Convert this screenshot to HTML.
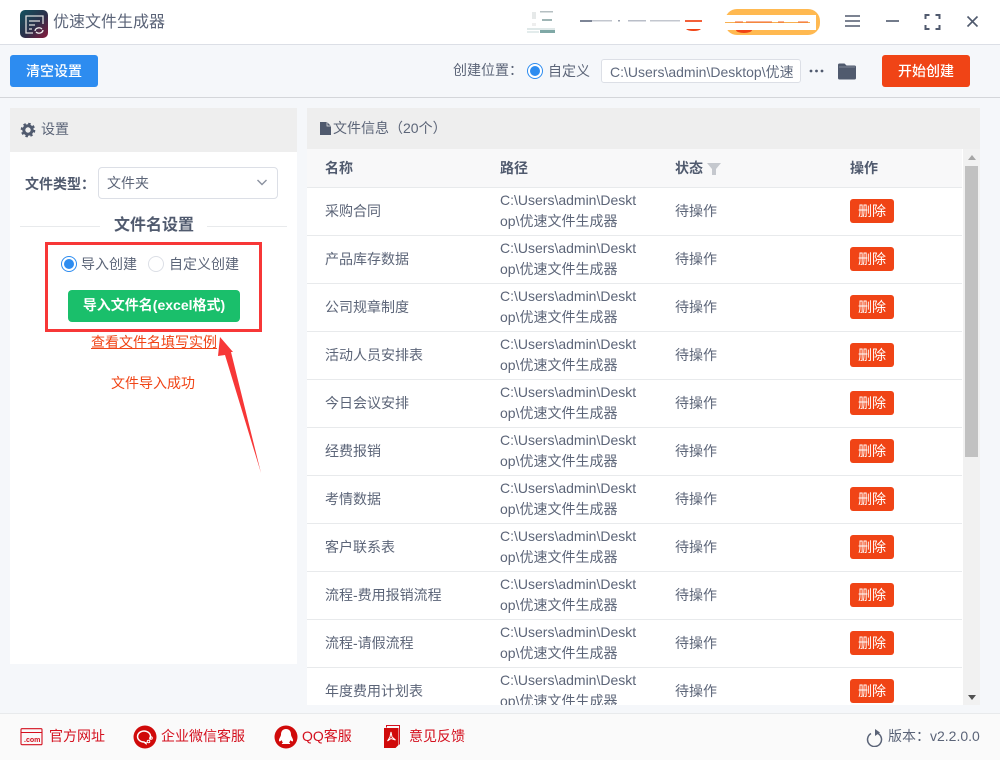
<!DOCTYPE html>
<html lang="zh"><head><meta charset="utf-8"><title>优速文件生成器</title>
<style>
*{box-sizing:border-box}
html,body{margin:0;padding:0}
body{width:1000px;height:760px;position:relative;overflow:hidden;background:#f5f7fa;font-family:"Liberation Sans","Noto Sans CJK SC",sans-serif;font-size:14px;color:#5c6578}
.a{position:absolute;white-space:nowrap}
.hl{color:#505a6e;font-weight:700}
.radio{position:absolute;width:16px;height:16px;border-radius:50%;border:1px solid #dcdfe6;background:#fff}
.radio.on{border:1px solid #2d8cf0}
.radio.on:after{content:"";position:absolute;left:2px;top:2px;width:10px;height:10px;border-radius:50%;background:#2d8cf0}
.row{position:absolute;left:307px;width:655px;height:48px;background:#fff;border-bottom:1px solid #e8eaec}
.row .n,.row .s{position:absolute;top:14px;line-height:18px;white-space:nowrap}
.row .n{left:18px}.row .s{left:368px}
.row .p{position:absolute;left:193px;top:2px;width:150px;line-height:21px;white-space:pre}
.row .d{position:absolute;left:543px;top:11px;width:44px;height:24px;background:#f04416;border-radius:3px;color:#fff;font-size:14px;line-height:24px;text-align:center}
.ft{position:absolute;top:727px;line-height:18px;color:#d4101e;white-space:nowrap}
</style></head><body>
<div class="a" style="left:0;top:0;width:1000px;height:45px;background:#fff;border-bottom:1px solid #dcdfe6"></div>
<svg class="a" style="left:20px;top:10px" width="28" height="28" viewBox="0 0 28 28"><defs><linearGradient id="g" x1="0" y1="0" x2="1" y2="1"><stop offset="0" stop-color="#12525f"/><stop offset=".55" stop-color="#2c2f4a"/><stop offset="1" stop-color="#8a1a3c"/></linearGradient></defs><rect width="28" height="28" rx="5" fill="url(#g)"/><path d="M23 14V6H6v17h7" fill="none" stroke="#ddd" stroke-width="1.300"/><path d="M9 11h11M9 15h6M9 19h3" stroke="#ddd" stroke-width="1.300"/><path d="M15 21a4 3.500 0 0 1 7-2M23 20a4 3.500 0 0 1-7 2" fill="none" stroke="#eee" stroke-width="1.300"/></svg>
<div class="a" style="left:53px;top:11px;font-size:16px;line-height:24px;color:#5b6478">优速文件生成器</div>
<!-- blurred header items -->
<svg class="a" style="left:520px;top:2px" width="310" height="40" viewBox="0 0 310 40">
<rect x="12" y="10" width="4" height="7" fill="#e6e9e9"/><rect x="12" y="21" width="4" height="3" fill="#eee"/><rect x="20" y="9" width="13" height="1.500" fill="#b5bfc2"/><rect x="22" y="17" width="10" height="2" fill="#9fb5b5"/><rect x="7" y="26" width="28" height="2" fill="#dfe8e8"/><rect x="7" y="29" width="12" height="2" fill="#e3ecec"/><rect x="20" y="28" width="15" height="3" fill="#7fa8a6"/>
<rect x="60" y="18" width="12" height="2" fill="#7d8596"/><rect x="72" y="18" width="20" height="1.500" fill="#c3c7cf"/><rect x="98" y="18" width="2" height="1.500" fill="#9aa1ae"/><rect x="108" y="18" width="18" height="1.500" fill="#b9bec8"/><rect x="130" y="18" width="30" height="1.500" fill="#c3c7cf"/>
<rect x="165" y="18" width="17" height="2" fill="#f04416" opacity=".85"/><path d="M166 27h15a8 3 0 0 1-15 0z" fill="#f04416"/>
<rect x="205" y="7" width="95" height="26" rx="12" fill="#ffb951"/>
<rect x="205" y="13" width="91" height="15" fill="#fff"/>
<rect x="205" y="20" width="85" height="1" fill="#f8b050"/>
<path d="M215 20h8M226 20h26M258 20h6M278 20h10" stroke="#f0602a" stroke-width="1"/>
<path d="M216 28h16a8 3 0 0 1-16 0z" fill="#f04416"/>
</svg>
<!-- window controls -->
<svg class="a" style="left:840px;top:10px" width="150" height="24" viewBox="0 0 150 24" fill="none" stroke="#505a6e" stroke-width="1.600"><path d="M5 6h15M5 11h15M5 16h15"/><path d="M46 11h13"/><path d="M85.500 9V5h4M95.500 5h4v4M99.500 15v4h-4M89.500 19h-4v-4" stroke-width="2"/><path d="M127.500 6.500l10 10M137.500 6.500l-10 10"/></svg>
<!-- toolbar -->
<div class="a" style="left:0;top:97px;width:1000px;height:1px;background:#d4d6da"></div>
<div class="a" style="left:10px;top:55px;width:88px;height:32px;background:#2d8cf0;border-radius:3px;color:#fff;text-align:center;line-height:33px;font-weight:500">清空设置</div>
<div class="a" style="left:453px;top:61px;line-height:18px">创建位置：</div>
<div class="radio on" style="left:527px;top:63px"></div>
<div class="a" style="left:548px;top:62px;line-height:18px">自定义</div>
<div class="a" style="left:601px;top:59px;width:200px;height:24px;background:#fff;border:1px solid #dcdfe6;border-radius:3px;padding-left:8px;line-height:24px;overflow:hidden;color:#606a7e">C:\Users\admin\Desktop\优速</div>
<svg class="a" style="left:808px;top:66px" width="18" height="10"><circle cx="3" cy="5" r="1.400" fill="#505a6e"/><circle cx="8.500" cy="5" r="1.400" fill="#505a6e"/><circle cx="14" cy="5" r="1.400" fill="#505a6e"/></svg>
<svg class="a" style="left:837px;top:62px" width="20" height="18" viewBox="0 0 20 18"><path d="M1 3q0-1.500 1.500-1.500h5l2 2h8q1.500 0 1.500 1.500v11q0 1.500-1.500 1.500h-15q-1.500 0-1.500-1.500z" fill="#505a6e"/><path d="M2 5h16" stroke="#8a92a2" stroke-width=".8"/></svg>
<div class="a" style="left:882px;top:55px;width:88px;height:32px;background:#f04416;border-radius:3px;color:#fff;text-align:center;line-height:33px;font-weight:500">开始创建</div>
<!-- left panel -->
<div class="a" style="left:10px;top:108px;width:287px;height:556px;background:#fff"></div>
<div class="a" style="left:10px;top:108px;width:287px;height:44px;background:#eee"></div>
<svg class="a" style="left:20px;top:122px" width="16" height="16" viewBox="0 0 16 16" fill="none" stroke="#505a6e"><circle cx="8" cy="8" r="4.200" stroke-width="3"/><circle cx="8" cy="8" r="6.300" stroke-width="2" stroke-dasharray="2.500 2.450"/></svg>
<div class="a" style="left:41px;top:120px;line-height:18px">设置</div>
<div class="a hl" style="left:25px;top:175px;line-height:18px">文件类型：</div>
<div class="a" style="left:98px;top:167px;width:180px;height:32px;background:#fff;border:1px solid #dcdfe6;border-radius:4px;padding-left:8px;line-height:31px">文件夹</div>
<svg class="a" style="left:256px;top:178px" width="12" height="10"><path d="M1.500 2l4.500 4.500L10.500 2" fill="none" stroke="#8a919f" stroke-width="1.400"/></svg>
<div class="a" style="left:20px;top:226px;width:80px;height:1px;background:#e8eaec"></div>
<div class="a" style="left:207px;top:226px;width:80px;height:1px;background:#e8eaec"></div>
<div class="a hl" style="left:114px;top:214px;font-size:16px;line-height:24px;font-weight:700">文件名设置</div>
<div class="a" style="left:45px;top:242px;width:217px;height:90px;border:3px solid #f73737"></div>
<div class="radio on" style="left:61px;top:256px"></div>
<div class="a" style="left:81px;top:255px;line-height:18px">导入创建</div>
<div class="radio" style="left:148px;top:256px"></div>
<div class="a" style="left:169px;top:255px;line-height:18px">自定义创建</div>
<div class="a" style="left:68px;top:290px;width:172px;height:32px;background:#1abf6b;border-radius:4px;color:#fff;text-align:center;line-height:31px;font-weight:700">导入文件名(excel格式)</div>
<div class="a" style="left:91px;top:333px;line-height:18px;color:#f04416;text-decoration:underline">查看文件名填写实例</div>
<div class="a" style="left:111px;top:374px;line-height:18px;color:#f04416">文件导入成功</div>
<svg class="a" style="left:210px;top:330px" width="60" height="150" viewBox="0 0 60 150"><path d="M10 7L23 22 21 22 51 143 15 25 8 26z" fill="#f73737"/></svg>
<!-- right panel -->
<div class="a" style="left:307px;top:108px;width:673px;height:41px;background:#eee"></div>
<div class="a" style="left:307px;top:149px;width:655px;height:39px;background:#f8f8f9;border-bottom:1px solid #e8eaec"></div>
<div class="a" style="left:962px;top:149px;width:1px;height:556px;background:#fff"></div>
<div class="a" style="left:963px;top:149px;width:17px;height:556px;background:#f1f1f1"></div>
<div class="a" style="left:965px;top:166px;width:13px;height:291px;background:#c1c1c1"></div>
<svg class="a" style="left:967px;top:155px" width="10" height="6"><path d="M1 5h8L5 0z" fill="#a6a6a6"/></svg>
<svg class="a" style="left:967px;top:694px" width="10" height="6"><path d="M1 1h8L5 6z" fill="#505050"/></svg>
<svg class="a" style="left:320px;top:122px" width="11" height="13" viewBox="0 0 11 13"><path d="M0 0h7l4 4v9H0z" fill="#505a6e"/><path d="M7 0v4h4" fill="none" stroke="#eee" stroke-width=".7"/></svg>
<div class="a" style="left:333px;top:119px;line-height:18px">文件信息（20个）</div>
<div class="a hl" style="left:325px;top:159px;line-height:18px">名称</div>
<div class="a hl" style="left:500px;top:159px;line-height:18px">路径</div>
<div class="a hl" style="left:675px;top:159px;line-height:18px">状态</div>
<svg class="a" style="left:707px;top:163px" width="14" height="12"><path d="M0 0h14L9 6v6H5V6z" fill="#c5c8ce"/></svg>
<div class="a hl" style="left:850px;top:159px;line-height:18px">操作</div>

<div class="row" style="top:188px"><span class="n">采购合同</span><span class="p">C:\Users\admin\Deskt
op\优速文件生成器</span><span class="s">待操作</span><span class="d">删除</span></div>
<div class="row" style="top:236px"><span class="n">产品库存数据</span><span class="p">C:\Users\admin\Deskt
op\优速文件生成器</span><span class="s">待操作</span><span class="d">删除</span></div>
<div class="row" style="top:284px"><span class="n">公司规章制度</span><span class="p">C:\Users\admin\Deskt
op\优速文件生成器</span><span class="s">待操作</span><span class="d">删除</span></div>
<div class="row" style="top:332px"><span class="n">活动人员安排表</span><span class="p">C:\Users\admin\Deskt
op\优速文件生成器</span><span class="s">待操作</span><span class="d">删除</span></div>
<div class="row" style="top:380px"><span class="n">今日会议安排</span><span class="p">C:\Users\admin\Deskt
op\优速文件生成器</span><span class="s">待操作</span><span class="d">删除</span></div>
<div class="row" style="top:428px"><span class="n">经费报销</span><span class="p">C:\Users\admin\Deskt
op\优速文件生成器</span><span class="s">待操作</span><span class="d">删除</span></div>
<div class="row" style="top:476px"><span class="n">考情数据</span><span class="p">C:\Users\admin\Deskt
op\优速文件生成器</span><span class="s">待操作</span><span class="d">删除</span></div>
<div class="row" style="top:524px"><span class="n">客户联系表</span><span class="p">C:\Users\admin\Deskt
op\优速文件生成器</span><span class="s">待操作</span><span class="d">删除</span></div>
<div class="row" style="top:572px"><span class="n">流程-费用报销流程</span><span class="p">C:\Users\admin\Deskt
op\优速文件生成器</span><span class="s">待操作</span><span class="d">删除</span></div>
<div class="row" style="top:620px"><span class="n">流程-请假流程</span><span class="p">C:\Users\admin\Deskt
op\优速文件生成器</span><span class="s">待操作</span><span class="d">删除</span></div>
<div class="row" style="top:668px;height:37px;border-bottom:0;overflow:hidden"><span class="n">年度费用计划表</span><span class="p">C:\Users\admin\Deskt
op\优速文件生成器</span><span class="s">待操作</span><span class="d">删除</span></div>
<!-- footer -->
<div class="a" style="left:0;top:713px;width:1000px;height:47px;background:#fafafa;border-top:1px solid #e8eaec"></div>
<svg class="a" style="left:20px;top:728px" width="23" height="18" viewBox="0 0 23 18"><rect x="1" y=".7" width="21" height="16" rx="1" fill="none" stroke="#d4101e" stroke-width="1.100"/><path d="M1 4.500h21" stroke="#d4101e" stroke-width="1.100"/><text x="4" y="14" font-size="7" font-weight="700" fill="#d4101e" font-family="Liberation Sans">.com</text></svg>
<div class="ft" style="left:49px;top:727px">官方网址</div>
<svg class="a" style="left:133px;top:725px" width="24" height="24" viewBox="0 0 24 24"><circle cx="12" cy="12" r="11.500" fill="#d00a0a"/><path d="M16.500 14.500A6.500 5.500 0 1 0 11 17l2 1.500V17" fill="none" stroke="#fff" stroke-width="1.500"/><circle cx="18" cy="13" r="1.300" fill="none" stroke="#fff"/><circle cx="15.500" cy="16.500" r="1.300" fill="none" stroke="#fff"/></svg>
<div class="ft" style="left:161px;top:727px">企业微信客服</div>
<svg class="a" style="left:274px;top:725px" width="24" height="24" viewBox="0 0 24 24"><circle cx="12" cy="12" r="11.500" fill="#d00a0a"/><path d="M12 4c-3.500 0-5 2.500-5 5.500 0 2-2.500 4.500-2 6.500.5 1 2 0 2.500-1 .5 1.500 1 2 1.500 2.500-1 .5-1.500 1-1 1.500h8c.5-.5 0-1-1-1.500.5-.5 1-1 1.500-2.500.5 1 2 2 2.500 1 .5-2-2-4.500-2-6.500C17 6.500 15.500 4 12 4z" fill="#fff"/></svg>
<div class="ft" style="left:302px;top:727px">QQ客服</div>
<svg class="a" style="left:384px;top:725px" width="17" height="24" viewBox="0 0 17 24"><path d="M2.500 2.500V.5h13v19" fill="none" stroke="#d4101e"/><path d="M0 3h14.500v17l-3 3H0z" fill="#d00a0a"/><path d="M7 7l1 5 3.500 3-4.500-1.500L3.500 16 6 12z" fill="none" stroke="#fff" stroke-width="1"/></svg>
<div class="ft" style="left:409px;top:727px">意见反馈</div>
<svg class="a" style="left:866px;top:729px" width="17" height="18" viewBox="0 0 17 18"><path d="M5 4.500a7 7 0 1 0 6.500-.3" fill="none" stroke="#5b6478" stroke-width="1.500"/><path d="M9 0l5 3.500L9 7z" fill="#5b6478"/></svg>
<div class="a" style="left:888px;top:727px;line-height:18px;color:#5b6478;font-size:14px">版本：v2.2.0.0</div>
</body></html>
